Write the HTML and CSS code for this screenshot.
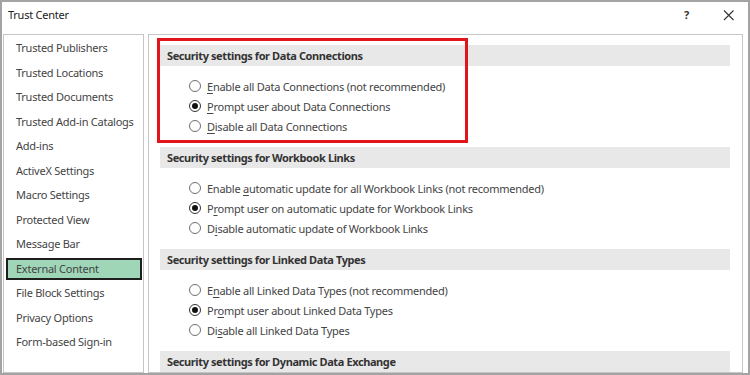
FILE: index.html
```html
<!DOCTYPE html>
<html>
<head>
    <title>Trust Center</title>
    <link rel="stylesheet" href="styles.css">
</head>
<body>
    <div class="window">
        <div class="titlebar">
            <span class="title">Trust Center</span>
            <span class="help">?</span>
            <span class="close">
                <svg width="12" height="12" viewBox="0 0 12 12"><path d="M1 1.5L10.5 11M10.5 1.5L1 11" stroke="#333" stroke-width="1.1" fill="none"/></svg>
            </span>
        </div>
        <div class="content">
            <ul class="nav">
                <li>Trusted Publishers</li>
                <li>Trusted Locations</li>
                <li>Trusted Documents</li>
                <li>Trusted Add-in Catalogs</li>
                <li>Add-ins</li>
                <li>ActiveX Settings</li>
                <li>Macro Settings</li>
                <li>Protected View</li>
                <li>Message Bar</li>
                <li class="selected">External Content</li>
                <li>File Block Settings</li>
                <li>Privacy Options</li>
                <li>Form-based Sign-in</li>
            </ul>
            <div class="main">
                <div class="highlight"></div>

                <div class="section">
                    <div class="section-title">Security settings for Data Connections</div>
                    <div class="options">
                        <div class="option"><span class="radio"></span><span><u>E</u>nable all Data Connections (not recommended)</span></div>
                        <div class="option"><span class="radio checked"></span><span><u>P</u>rompt user about Data Connections</span></div>
                        <div class="option"><span class="radio"></span><span><u>D</u>isable all Data Connections</span></div>
                    </div>
                </div>

                <div class="section">
                    <div class="section-title">Security settings for Workbook Links</div>
                    <div class="options">
                        <div class="option"><span class="radio"></span><span>Enable <u>a</u>utomatic update for all Workbook Links (not recommended)</span></div>
                        <div class="option"><span class="radio checked"></span><span>P<u>r</u>ompt user on automatic update for Workbook Links</span></div>
                        <div class="option"><span class="radio"></span><span>D<u>i</u>sable automatic update of Workbook Links</span></div>
                    </div>
                </div>

                <div class="section">
                    <div class="section-title">Security settings for Linked Data Types</div>
                    <div class="options">
                        <div class="option"><span class="radio"></span><span>E<u>n</u>able all Linked Data Types (not recommended)</span></div>
                        <div class="option"><span class="radio checked"></span><span>Pr<u>o</u>mpt user about Linked Data Types</span></div>
                        <div class="option"><span class="radio"></span><span>Di<u>s</u>able all Linked Data Types</span></div>
                    </div>
                </div>

                <div class="section">
                    <div class="section-title">Security settings for Dynamic Data Exchange</div>
                </div>
            </div>
        </div>
    </div>
</body>
</html>
```

FILE: styles.css
```css
body {
    margin: 0;
    font-family: "Noto Sans", "Open Sans", sans-serif;
    font-size: 11px;
    letter-spacing: -0.25px;
    color: #444;
    background-color: #fff;
}
.window {
    width: 750px;
    height: 375px;
    box-sizing: border-box;
    border: 2px solid #a3a3a3;
    overflow: hidden;
    display: flex;
    flex-direction: column;
}
.titlebar {
    height: 32px;
    flex-shrink: 0;
    display: flex;
    align-items: flex-start;
}
.title {
    line-height: 26px;
    padding-left: 6px;
    color: #222;
}
.help {
    margin-left: auto;
    line-height: 26px;
    font-weight: bold;
    color: #333;
}
.close {
    display: flex;
    height: 26px;
    align-items: center;
    margin: 0 13px 0 34px;
}
.content {
    flex: 1;
    display: flex;
    gap: 4px;
    padding-left: 1px;
    min-height: 0;
}
.nav {
    list-style: none;
    margin: 0;
    padding: 2px 0 0 0;
    width: 141px;
    box-sizing: border-box;
    border: 1px solid #c6c6c6;
}
.nav li {
    height: 22px;
    line-height: 18px;
    box-sizing: border-box;
    border: 2px solid transparent;
    margin: 0 1px 2.5px 2px;
    padding-left: 8px;
    white-space: nowrap;
}
.nav li.selected {
    background-color: #9fd6b8;
    border-color: #1e1e1e;
}
.main {
    flex: 1;
    position: relative;
    margin-right: 5px;
    border: 1px solid #c6c6c6;
    padding: 10px 12px 0 11px;
}
.highlight {
    position: absolute;
    left: 8px;
    top: 3px;
    width: 311px;
    height: 105px;
    box-sizing: border-box;
    border: 3px solid #e3151c;
}
.section-title {
    height: 21px;
    line-height: 21px;
    background-color: #e8e8e8;
    padding-left: 7px;
    font-weight: bold;
    letter-spacing: -0.4px;
    color: #333;
}
.options {
    padding: 10px 0 11px 29px;
}
.option {
    height: 20px;
    display: flex;
    align-items: center;
    gap: 6px;
}
.radio {
    width: 12px;
    height: 12px;
    box-sizing: border-box;
    border: 1px solid #6e6e6e;
    border-radius: 50%;
    background: #fff;
    display: flex;
    align-items: center;
    justify-content: center;
}
.radio.checked {
    border-color: #333;
}
.radio.checked::after {
    content: "";
    width: 6px;
    height: 6px;
    border-radius: 50%;
    background: #111;
}
u {
    text-underline-offset: 2px;
}
```
